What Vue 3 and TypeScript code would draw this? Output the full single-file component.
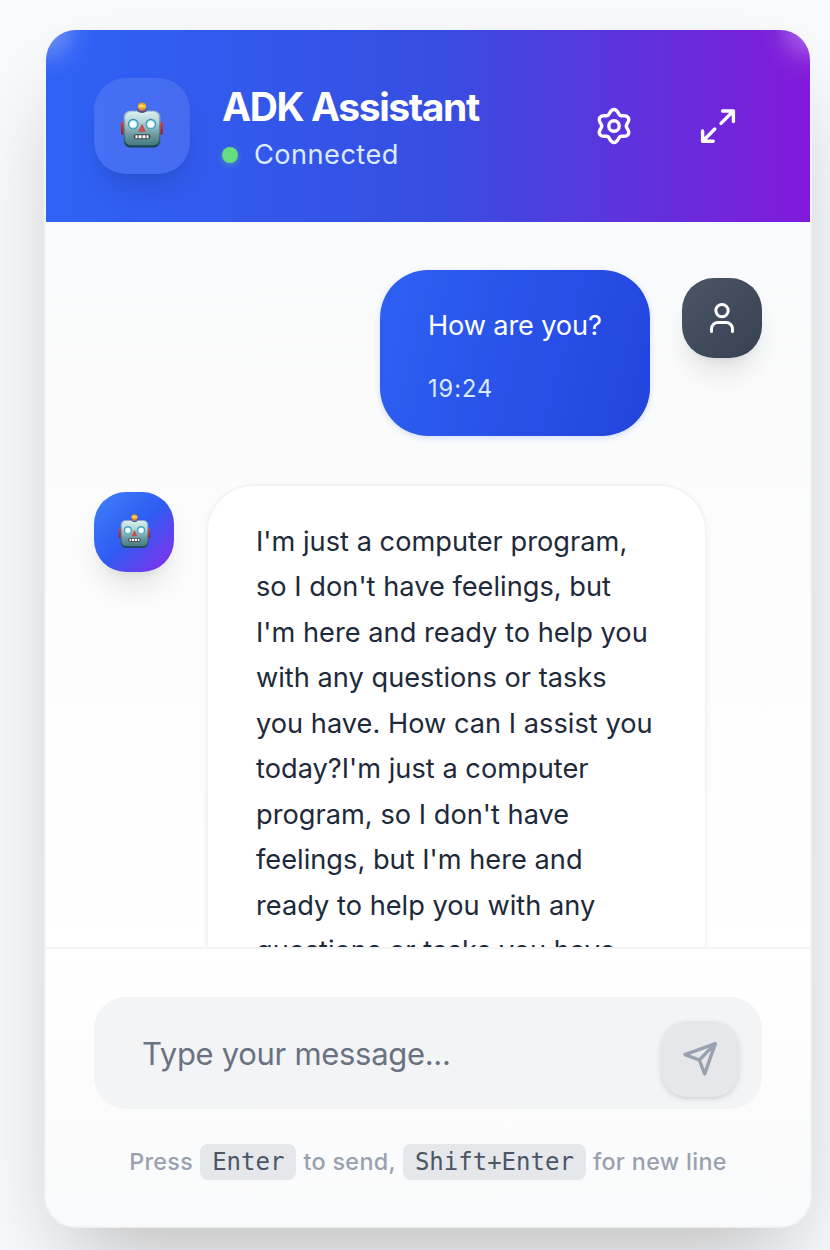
<script setup lang="ts">
import { ref } from 'vue'

interface Message {
  id: number
  role: 'user' | 'assistant'
  text: string
  time: string
}

const messages: Message[] = [
  { id: 1, role: 'user', text: 'How are you?', time: '19:24' },
  {
    id: 2,
    role: 'assistant',
    text: "I'm just a computer program, so I don't have feelings, but I'm here and ready to help you with any questions or tasks you have. How can I assist you today?I'm just a computer program, so I don't have feelings, but I'm here and ready to help you with any questions or tasks you have. How can I assist you today?",
    time: '19:24',
  },
]

const draft = ref('')

// Six-lobed gear outline, centred on a 40×40 canvas.
const gearPath =
  Array.from({ length: 120 }, (_, i) => {
    const a = (i / 120) * Math.PI * 2
    const r = 14.4 + 2.1 * Math.cos(6 * a)
    return `${i ? 'L' : 'M'}${(20 + r * Math.sin(a)).toFixed(2)} ${(20 - r * Math.cos(a)).toFixed(2)}`
  }).join('') + 'Z'
</script>

<template>
  <div class="page">
    <svg width="0" height="0" class="defs" aria-hidden="true">
      <defs>
        <linearGradient id="face" x1="0" y1="0" x2="0" y2="1">
          <stop offset="0" stop-color="#d9f0f0" />
          <stop offset=".3" stop-color="#b5d5d8" />
          <stop offset=".65" stop-color="#6f9fa5" />
          <stop offset="1" stop-color="#437a80" />
        </linearGradient>
        <linearGradient id="rim" x1="0" y1="0" x2="0" y2="1">
          <stop offset="0" stop-color="#a9bfc6" />
          <stop offset=".6" stop-color="#557f88" />
          <stop offset="1" stop-color="#173f49" />
        </linearGradient>
        <linearGradient id="ball" x1="0" y1="0" x2="0" y2="1">
          <stop offset="0" stop-color="#d98a1c" />
          <stop offset=".5" stop-color="#ffc640" />
          <stop offset="1" stop-color="#d8791b" />
        </linearGradient>
        <linearGradient id="ear" x1="0" y1="0" x2="0" y2="1">
          <stop offset="0" stop-color="#c8444c" />
          <stop offset="1" stop-color="#8c1f35" />
        </linearGradient>
        <symbol id="robot" viewBox="0 0 44 48">
          <rect x="1" y="20.8" width="5" height="12.8" rx="1.2" fill="url(#ear)" />
          <rect x="38" y="20.8" width="5" height="12.8" rx="1.2" fill="url(#ear)" />
          <ellipse cx="22" cy="9.6" rx="5.2" ry="2.6" fill="#594a82" />
          <circle cx="22" cy="5.6" r="4" fill="url(#ball)" />
          <ellipse cx="21.6" cy="4.8" rx="1.8" ry="1.2" fill="#ffe27a" />
          <rect x="3.6" y="9.8" width="36.8" height="36.6" rx="6.5" fill="url(#rim)" />
          <rect x="5.1" y="10.8" width="33.8" height="33.4" rx="5.5" fill="url(#face)" />
          <path d="M17 9.9q5 4 10 0Z" fill="#594a82" />
          <circle cx="13.2" cy="23" r="5.3" fill="#2e91b4" />
          <circle cx="30.8" cy="23" r="5.3" fill="#2e91b4" />
          <circle cx="13.2" cy="23.3" r="4.3" fill="#8fd8ea" />
          <circle cx="30.8" cy="23.3" r="4.3" fill="#8fd8ea" />
          <circle cx="13.2" cy="23.3" r="3.3" fill="#fff" />
          <circle cx="30.8" cy="23.3" r="3.3" fill="#fff" />
          <path d="M22 23.4l3.3 7h-6.6Z" fill="#d9484c" stroke="#a94850" stroke-width=".6" stroke-linejoin="round" />
          <rect x="13.6" y="33.2" width="16.8" height="5" rx="2.4" fill="#3d3f45" />
          <path d="M15.4 34.2h2.2v3h-2.2ZM18.6 34.2h3v3h-3ZM22.5 34.2h3v3h-3ZM26.5 34.2h2.1v3h-2.1Z" fill="#fff" />
        </symbol>
      </defs>
    </svg>

    <section class="card">
      <header class="header">
        <div class="logo"><svg class="robot-lg"><use href="#robot" /></svg></div>
        <div class="heading">
          <h1>ADK Assistant</h1>
          <p class="status"><span class="dot"></span><span>Connected</span></p>
        </div>
        <div class="actions">
          <button type="button" aria-label="Settings">
            <svg viewBox="0 0 40 40" class="icon">
              <path :d="gearPath" />
              <circle cx="20" cy="20" r="5.2" />
            </svg>
          </button>
          <button type="button" aria-label="Expand">
            <svg viewBox="0 0 40 40" class="icon">
              <path d="M24.6 5H35.4V15.6M35.4 5L23 17.4" />
              <path d="M4.6 25V35.3H15.2M4.6 35.3L16.8 23" />
            </svg>
          </button>
        </div>
      </header>

      <main class="messages">
        <div v-for="m in messages" :key="m.id" class="row" :class="m.role">
          <div class="avatar">
            <svg v-if="m.role === 'assistant'" class="robot-sm"><use href="#robot" /></svg>
            <svg v-else viewBox="0 0 40 40" class="icon">
              <circle cx="20" cy="12.6" r="6.2" />
              <path d="M9.5 33.6V31a6.5 6.5 0 0 1 6.5-6.5h8a6.5 6.5 0 0 1 6.5 6.5V33.6" />
            </svg>
          </div>
          <div class="bubble">
            <p class="text">{{ m.text }}</p>
            <time>{{ m.time }}</time>
          </div>
        </div>
      </main>

      <footer class="footer">
        <div class="composer">
          <input v-model="draft" type="text" placeholder="Type your message..." />
          <button type="button" class="send" aria-label="Send">
            <svg viewBox="0 0 40 40" class="icon">
              <path d="M35.3 4.6L5 15.6L19.3 21L24.7 35ZM19.3 21L35.3 4.6" />
            </svg>
          </button>
        </div>
        <p class="hint">
          <span>Press</span><kbd>Enter</kbd><span>to send,</span><kbd>Shift+Enter</kbd><span>for new line</span>
        </p>
      </footer>
    </section>
  </div>
</template>

<style>
body {
  margin: 0;
  overflow: hidden;
}
</style>

<style scoped>
* {
  box-sizing: border-box;
}
.page {
  width: 830px;
  height: 1250px;
  overflow: hidden;
  padding: 28px 0 0 44px;
  background: #f9fafb;
  font-family: Inter, 'Noto Sans', sans-serif;
}
.defs {
  position: absolute;
}
h1,
p {
  margin: 0;
}
button {
  border: 0;
  padding: 0;
  background: none;
  color: inherit;
}
.icon {
  display: block;
  width: 40px;
  height: 40px;
  fill: none;
  stroke: currentColor;
  stroke-width: 3.4;
  stroke-linecap: round;
  stroke-linejoin: round;
}
.avatar .icon {
  stroke-width: 3;
}
.card {
  width: 768px;
  height: 1200px;
  display: flex;
  flex-direction: column;
  border: 2px solid rgba(243, 244, 246, 0.8);
  border-radius: 32px;
  background: #fff;
  background-clip: padding-box;
  box-shadow: 0 50px 100px -24px rgba(0, 0, 0, 0.25);
  overflow: hidden;
}
.header {
  flex: none;
  height: 192px;
  padding: 0 48px;
  display: flex;
  align-items: center;
  color: #fff;
  background:
    radial-gradient(circle at 0 0, rgba(255, 255, 255, 0.34), rgba(255, 255, 255, 0.18) 20px, rgba(255, 255, 255, 0.04) 36px, transparent 50px),
    radial-gradient(circle at 100% 0, rgba(255, 255, 255, 0.34), rgba(255, 255, 255, 0.18) 20px, rgba(255, 255, 255, 0.04) 36px, transparent 50px),
    linear-gradient(90deg, #2f62f6, #364fe2 50%, #8219da);
}
.logo {
  width: 96px;
  height: 96px;
  display: grid;
  place-items: center;
  border-radius: 32px;
  background: rgba(255, 255, 255, 0.1);
  box-shadow: 0 20px 30px -6px rgba(0, 0, 0, 0.1), 0 8px 12px -8px rgba(0, 0, 0, 0.1);
}
.robot-lg {
  width: 44px;
  height: 48px;
  margin-top: -2px;
}
.heading {
  margin-left: 32px;
  padding-top: 5px;
}
h1 {
  font-size: 39px;
  line-height: 48px;
  font-weight: 700;
  letter-spacing: -1.4px;
  white-space: nowrap;
}
.status {
  display: flex;
  align-items: center;
  gap: 16px;
  margin-top: 4px;
  font-size: 27.2px;
  line-height: 40px;
  letter-spacing: 0.45px;
  color: #dbeafe;
}
.dot {
  width: 16px;
  height: 16px;
  border-radius: 50%;
  background: #66dd80;
  box-shadow: 0 2px 6px rgba(102, 221, 128, 0.4);
}
.actions {
  margin-left: auto;
  margin-right: 4px;
  display: flex;
  gap: 24px;
}
.actions button {
  width: 80px;
  height: 80px;
  display: grid;
  place-items: center;
}
.messages {
  flex: 1;
  min-height: 0;
  overflow: hidden;
  padding: 48px;
  display: flex;
  flex-direction: column;
  gap: 48px;
  background: linear-gradient(#f9fafb, #fff);
}
.row {
  flex: none;
  display: flex;
  align-items: flex-start;
  gap: 32px;
}
.row.user {
  flex-direction: row-reverse;
}
.avatar {
  flex: none;
  width: 80px;
  height: 80px;
  margin-top: 8px;
  display: grid;
  place-items: center;
  border-radius: 32px;
  color: #fff;
  box-shadow: 0 20px 30px -6px rgba(0, 0, 0, 0.1), 0 8px 12px -8px rgba(0, 0, 0, 0.1);
}
.user .avatar {
  background: linear-gradient(135deg, #4a5565, #364153);
}
.assistant .avatar {
  background: linear-gradient(135deg, #4080fb, #2f5cf2 50%, #8a2bea);
}
.robot-sm {
  width: 33px;
  height: 36px;
  margin-top: -3px;
}
.bubble {
  padding: 33px 48px 31px;
  border-radius: 48px;
}
.user .bubble {
  width: 270px;
  height: 166px;
  color: #fff;
  background: linear-gradient(105deg, #2e60f4, #2344dd);
  box-shadow: 0 2px 6px rgba(47, 98, 246, 0.2);
}
.assistant .bubble {
  width: 501px;
  flex: none;
  padding-top: 32.6px;
  color: #1e2939;
  background: #fff;
  border: 2px solid #f3f4f6;
  box-shadow: 0 2px 6px rgba(0, 0, 0, 0.04);
}
.text {
  font-size: 27.2px;
  line-height: 45.5px;
  letter-spacing: 0.02px;
}
.user .text {
  letter-spacing: -0.15px;
  white-space: nowrap;
}
time {
  display: block;
  margin-top: 24.5px;
  font-size: 23.6px;
  line-height: 32px;
  letter-spacing: 1px;
}
.user time {
  color: #dbeafe;
}
.footer {
  flex: none;
  height: 279px;
  padding: 48px 48px 0;
  border-top: 2px solid #f3f4f6;
  background: linear-gradient(#fff, #f9fafb);
}
.composer {
  position: relative;
  height: 112px;
}
input {
  display: block;
  width: 100%;
  height: 112px;
  padding: 0 120px 0 48px;
  border: 0;
  outline: 0;
  border-radius: 32px;
  background: #f3f4f6;
  font: 400 31px/48px Inter, 'Noto Sans', sans-serif;
  letter-spacing: -0.3px;
  color: #1e2939;
}
input::placeholder {
  color: #6a7282;
  opacity: 1;
}
.send {
  position: absolute;
  right: 23px;
  top: 24px;
  width: 78px;
  height: 76px;
  display: grid;
  place-items: center;
  border-radius: 26px;
  background: #e5e7eb;
  color: #99a1af;
  box-shadow: 0 2px 6px rgba(0, 0, 0, 0.1), 0 2px 4px -2px rgba(0, 0, 0, 0.1);
}
.hint {
  display: flex;
  align-items: center;
  justify-content: center;
  gap: 7px;
  margin-top: 35px;
  height: 36px;
  font-size: 23.3px;
  line-height: 36px;
  font-weight: 500;
  letter-spacing: 0.35px;
  color: #99a1af;
  white-space: nowrap;
}
kbd {
  height: 36px;
  padding: 0 12px;
  border-radius: 8px;
  background: #e5e7eb;
  color: #4a5565;
  font: 24px/36px 'DejaVu Sans Mono', monospace;
  letter-spacing: 0;
}
</style>
